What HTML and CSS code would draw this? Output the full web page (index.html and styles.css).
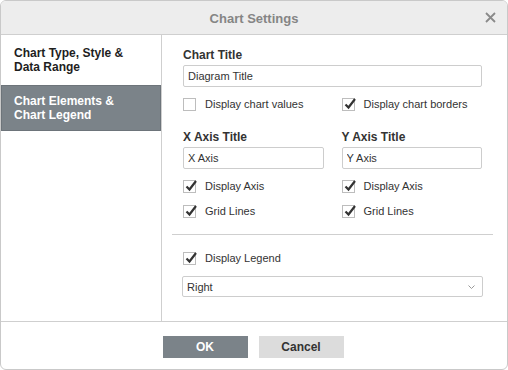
FILE: index.html
```html
<!DOCTYPE html>
<html lang="en">
<head>
  <meta charset="UTF-8">
  <title>Chart Settings</title>
  <link rel="stylesheet" href="styles.css">
</head>
<body>
  <div class="dialog">
    <div class="dialog-header">
      <span class="dialog-title">Chart Settings</span>
      <button class="close-btn" aria-label="Close">
        <svg width="11" height="11" viewBox="0 0 11 11"><path d="M1 1L10 10M10 1L1 10" stroke="#8a8a8a" stroke-width="1.8" fill="none"/></svg>
      </button>
    </div>

    <div class="dialog-body">
      <div class="sidebar">
        <div class="side-item">Chart Type, Style &amp;<br>Data Range</div>
        <div class="side-item active">Chart Elements &amp;<br>Chart Legend</div>
      </div>

      <div class="content">
        <div class="group">
          <div class="field-label">Chart Title</div>
          <input class="text-input" value="Diagram Title">
          <div class="grid two">
            <label class="check"><span class="box"></span>Display chart values</label>
            <label class="check"><span class="box checked"><svg width="14" height="14" viewBox="0 0 14 14"><path d="M2.5 7.5L5.5 10.5L12 2" stroke="#333" stroke-width="2.2" fill="none"/></svg></span>Display chart borders</label>
          </div>
        </div>

        <div class="group grid two axes">
          <div>
            <div class="field-label">X Axis Title</div>
            <input class="text-input" value="X Axis">
            <label class="check spaced"><span class="box checked"><svg width="14" height="14" viewBox="0 0 14 14"><path d="M2.5 7.5L5.5 10.5L12 2" stroke="#333" stroke-width="2.2" fill="none"/></svg></span>Display Axis</label>
            <label class="check"><span class="box checked"><svg width="14" height="14" viewBox="0 0 14 14"><path d="M2.5 7.5L5.5 10.5L12 2" stroke="#333" stroke-width="2.2" fill="none"/></svg></span>Grid Lines</label>
          </div>
          <div>
            <div class="field-label">Y Axis Title</div>
            <input class="text-input" value="Y Axis">
            <label class="check spaced"><span class="box checked"><svg width="14" height="14" viewBox="0 0 14 14"><path d="M2.5 7.5L5.5 10.5L12 2" stroke="#333" stroke-width="2.2" fill="none"/></svg></span>Display Axis</label>
            <label class="check"><span class="box checked"><svg width="14" height="14" viewBox="0 0 14 14"><path d="M2.5 7.5L5.5 10.5L12 2" stroke="#333" stroke-width="2.2" fill="none"/></svg></span>Grid Lines</label>
          </div>
        </div>

        <hr class="divider">

        <div class="group legend">
          <label class="check"><span class="box checked"><svg width="14" height="14" viewBox="0 0 14 14"><path d="M2.5 7.5L5.5 10.5L12 2" stroke="#333" stroke-width="2.2" fill="none"/></svg></span>Display Legend</label>
          <div class="select">
            <span>Right</span>
            <svg width="7" height="4" viewBox="0 0 7 4"><path d="M0.5 0.5L3.5 3.5L6.5 0.5" stroke="#999" stroke-width="1" fill="none"/></svg>
          </div>
        </div>
      </div>
    </div>

    <div class="dialog-footer">
      <button class="btn btn-primary">OK</button>
      <button class="btn btn-secondary">Cancel</button>
    </div>
  </div>
</body>
</html>
```

FILE: styles.css
```css
body {
  margin: 0;
  font-family: 'Liberation Sans', Arial, sans-serif;
  color: #333;
  background: #fff;
}
.dialog {
  width: 508px;
  height: 370px;
  box-sizing: border-box;
  border: 1px solid #c9c9c9;
  border-radius: 6px;
  display: flex;
  flex-direction: column;
  overflow: hidden;
}
.dialog-header {
  height: 33px;
  flex: none;
  background: #ededed;
  border-bottom: 1px solid #cfcfcf;
  display: flex;
  align-items: center;
  justify-content: center;
  position: relative;
}
.dialog-title {
  font-size: 13px;
  font-weight: bold;
  color: #858585;
  margin-top: 2px;
}
.close-btn {
  position: absolute;
  right: 11px;
  top: 11px;
  width: 11px;
  height: 11px;
  padding: 0;
  border: none;
  background: transparent;
  display: flex;
}
.dialog-body {
  flex: 1;
  display: flex;
  min-height: 0;
}
.sidebar {
  width: 160px;
  flex: none;
  border-right: 1px solid #cfcfcf;
}
.side-item {
  height: 50px;
  box-sizing: border-box;
  padding: 11px 13px;
  font-size: 12px;
  line-height: 14px;
  font-weight: bold;
  color: #1e1e1e;
}
.side-item.active {
  height: 46px;
  padding: 8px 12px;
  background: #7b8389;
  border: 1px solid #6d747a;
  color: #fff;
}
.content {
  flex: 1;
  padding: 13px 14px 0 10px;
}
.group {
  padding: 0 11px;
}
.grid.two {
  display: grid;
  grid-template-columns: 1fr 1fr;
  column-gap: 18px;
}
.field-label {
  font-size: 12px;
  line-height: 14px;
  font-weight: bold;
  color: #333;
}
.text-input {
  display: block;
  width: 100%;
  height: 22px;
  box-sizing: border-box;
  margin-top: 3px;
  padding: 0 4px;
  border: 1px solid #cdcdcd;
  border-radius: 2px;
  font-family: inherit;
  font-size: 11px;
  color: #333;
  outline: none;
}
.group .grid.two {
  margin-top: 10px;
}
.check {
  display: flex;
  align-items: center;
  height: 14px;
  font-size: 11px;
  color: #333;
  margin-top: 11px;
}
.group > .grid .check,
.legend > .check {
  margin-top: 0;
}
.check.spaced {
  margin-top: 10px;
}
.box {
  width: 13px;
  height: 13px;
  box-sizing: border-box;
  border: 1px solid #bdbdbd;
  background: #fff;
  margin-right: 9px;
  position: relative;
  flex: none;
}
.box svg {
  position: absolute;
  left: 0;
  top: -2px;
}
.axes {
  margin-top: 19px;
}
.divider {
  border: none;
  border-top: 1px solid #cfcfcf;
  margin: 16px 0 16px;
}
.legend {
  padding: 0 10px;
}
.legend > .check {
  padding-left: 1px;
}
.select {
  margin-top: 11px;
  height: 21px;
  box-sizing: border-box;
  border: 1px solid #cdcdcd;
  border-radius: 2px;
  padding: 0 4px 0 4px;
  display: flex;
  align-items: center;
  justify-content: space-between;
  font-size: 11px;
  color: #333;
}
.select svg {
  margin-right: 3px;
}
.dialog-footer {
  height: 48px;
  flex: none;
  border-top: 1px solid #cfcfcf;
  display: flex;
  justify-content: center;
  align-items: flex-start;
  gap: 11px;
  padding-top: 14px;
  box-sizing: border-box;
  padding-left: 2px;
  padding-right: 4px;
}
.btn {
  width: 85px;
  height: 22px;
  border: none;
  font-family: inherit;
  font-size: 12px;
  font-weight: bold;
  cursor: pointer;
}
.btn-primary {
  background: #7b8389;
  color: #fff;
}
.btn-secondary {
  background: #dcdcdc;
  color: #333;
}
```
